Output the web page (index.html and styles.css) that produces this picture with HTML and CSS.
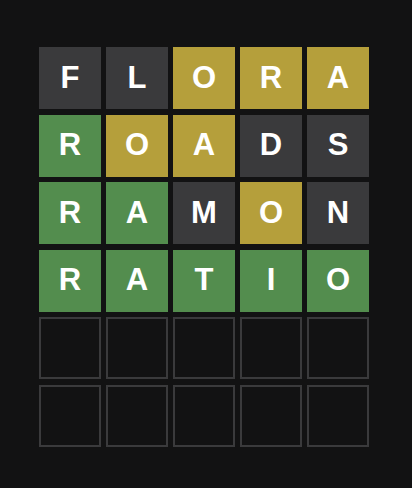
FILE: index.html
```html
<!DOCTYPE html>
<html>
<head>
<meta charset="utf-8">
<link rel="stylesheet" href="styles.css">
</head>
<body>
<div class="board">
  <div class="row"><div class="tile absent">F</div><div class="tile absent">L</div><div class="tile present">O</div><div class="tile present">R</div><div class="tile present">A</div></div>
  <div class="row"><div class="tile correct">R</div><div class="tile present">O</div><div class="tile present">A</div><div class="tile absent">D</div><div class="tile absent">S</div></div>
  <div class="row"><div class="tile correct">R</div><div class="tile correct">A</div><div class="tile absent">M</div><div class="tile present">O</div><div class="tile absent">N</div></div>
  <div class="row"><div class="tile correct">R</div><div class="tile correct">A</div><div class="tile correct">T</div><div class="tile correct">I</div><div class="tile correct">O</div></div>
  <div class="row"><div class="tile empty"></div><div class="tile empty"></div><div class="tile empty"></div><div class="tile empty"></div><div class="tile empty"></div></div>
  <div class="row"><div class="tile empty"></div><div class="tile empty"></div><div class="tile empty"></div><div class="tile empty"></div><div class="tile empty"></div></div>
</div>
</body>
</html>
```
FILE: styles.css
```css
html, body {
  margin: 0;
  padding: 0;
  background: #121213;
  width: 412px;
  height: 488px;
  overflow: hidden;
}
.board {
  padding: 47px 0 0 39px;
  display: grid;
  grid-template-rows: repeat(6, 62px);
  row-gap: 5.6px;
  width: 330px;
}
.row {
  display: grid;
  grid-template-columns: repeat(5, 62px);
  column-gap: 5px;
}
.tile {
  box-sizing: border-box;
  width: 62px;
  height: 62px;
  display: flex;
  align-items: center;
  justify-content: center;
  padding-bottom: 2px;
  font-family: "Liberation Sans", Arial, sans-serif;
  font-weight: bold;
  font-size: 31px;
  line-height: 1;
  color: #ffffff;
  text-transform: uppercase;
}
.absent { background: #3a3a3c; }
.present { background: #b59f3b; }
.correct { background: #538d4e; }
.empty { border: 2px solid #3a3a3c; }
```
